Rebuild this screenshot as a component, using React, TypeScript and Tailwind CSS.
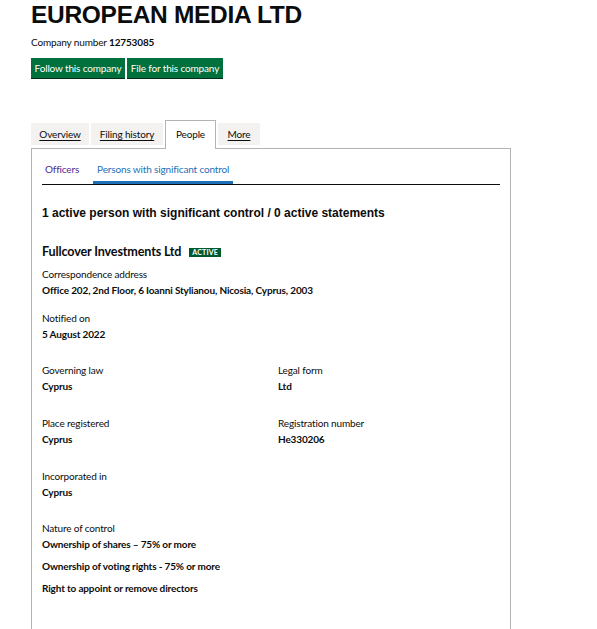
import React from "react";

const body = "font-['Lato','Noto_Sans',sans-serif] tracking-[-0.15px]";

function Field({ label, value, className = "" }: { label: string; value: string; className?: string }) {
  return (
    <div className={className}>
      <div className="text-[10px] leading-[16px]">{label}</div>
      <div className="text-[10px] leading-[16px] font-bold">{value}</div>
    </div>
  );
}

const tabs = [
  { name: "Overview", w: "w-[58px]" },
  { name: "Filing history", w: "w-[72px]" },
  { name: "People", w: "w-[51px]" },
  { name: "More", w: "w-[42px]" },
];

export default function App() {
  return (
    <div className={`min-h-[629px] bg-white text-[#0b0c0c] pl-[31px] ${body}`}>
      <h1 className="font-['Liberation_Sans',Arial,sans-serif] font-bold text-[24.5px] leading-[30px] tracking-[-0.3px]">
        EUROPEAN MEDIA LTD
      </h1>
      <p className="mt-[4px] text-[10px] leading-[16px]">
        Company number <span className="font-bold">12753085</span>
      </p>
      <div className="mt-[8px] flex gap-[2px]">
        <button className="h-[20px] w-[94px] whitespace-nowrap bg-[#00703c] text-white text-[10px] tracking-[-0.15px] shadow-[0_1px_0_#002d18]">
          Follow this company
        </button>
        <button className="h-[20px] w-[96px] whitespace-nowrap bg-[#00703c] text-white text-[10px] tracking-[-0.15px] shadow-[0_1px_0_#002d18]">
          File for this company
        </button>
      </div>

      <div className="mt-[42px] w-[480px]">
        <ul className="flex items-end gap-[2px] h-[28px] relative z-10">
          {tabs.map((t) =>
            t.name === "People" ? (
              <li
                key={t.name}
                className={`${t.w} h-[29px] -mb-[1px] bg-white border border-b-0 border-[#b1b4b6] text-center text-[10px] leading-[26px]`}
              >
                {t.name}
              </li>
            ) : (
              <li
                key={t.name}
                className={`${t.w} h-[22px] mb-[3px] bg-[#f3f2f1] text-center text-[10px] leading-[22px] underline underline-offset-2`}
              >
                {t.name}
              </li>
            )
          )}
        </ul>
        <div className="border border-[#b1b4b6] px-[10px] pt-[8px] pb-[40px]">
          <div className="flex border-b border-[#0b0c0c] text-[10px]">
            <span className="px-[3px] h-[27px] leading-[24px] text-[#4c2c92]">Officers</span>
            <span className="ml-[11px] px-[4px] h-[27px] leading-[24px] text-[#1d70b8] border-b-[3px] border-[#1d70b8]">
              Persons with significant control
            </span>
          </div>

          <h2 className="mt-[18px] font-['Liberation_Sans',Arial,sans-serif] font-bold text-[12px] leading-[20px] tracking-normal">
            1 active person with significant control / 0 active statements
          </h2>

          <div className="mt-[19px] flex items-center gap-[8px]">
            <h3 className="font-bold text-[12.6px] leading-[20px]">Fullcover Investments Ltd</h3>
            <span className="bg-[#005a30] text-white text-[7px] font-bold leading-[9px] px-[3px] tracking-[0.2px]">
              ACTIVE
            </span>
          </div>

          <Field
            className="mt-[4px]"
            label="Correspondence address"
            value="Office 202, 2nd Floor, 6 Ioanni Stylianou, Nicosia, Cyprus, 2003"
          />
          <Field className="mt-[12px]" label="Notified on" value="5 August 2022" />

          <div className="mt-[20px] grid grid-cols-2 gap-x-[14px] gap-y-[21px]">
            <Field label="Governing law" value="Cyprus" />
            <Field label="Legal form" value="Ltd" />
            <Field label="Place registered" value="Cyprus" />
            <Field label="Registration number" value="He330206" />
            <Field label="Incorporated in" value="Cyprus" />
          </div>

          <div className="mt-[20px]">
            <div className="text-[10px] leading-[16px]">Nature of control</div>
            <ul className="text-[10px] font-bold leading-[16px]">
              <li>Ownership of shares – 75% or more</li>
              <li className="mt-[6px]">Ownership of voting rights - 75% or more</li>
              <li className="mt-[6px]">Right to appoint or remove directors</li>
            </ul>
          </div>
        </div>
      </div>
    </div>
  );
}
